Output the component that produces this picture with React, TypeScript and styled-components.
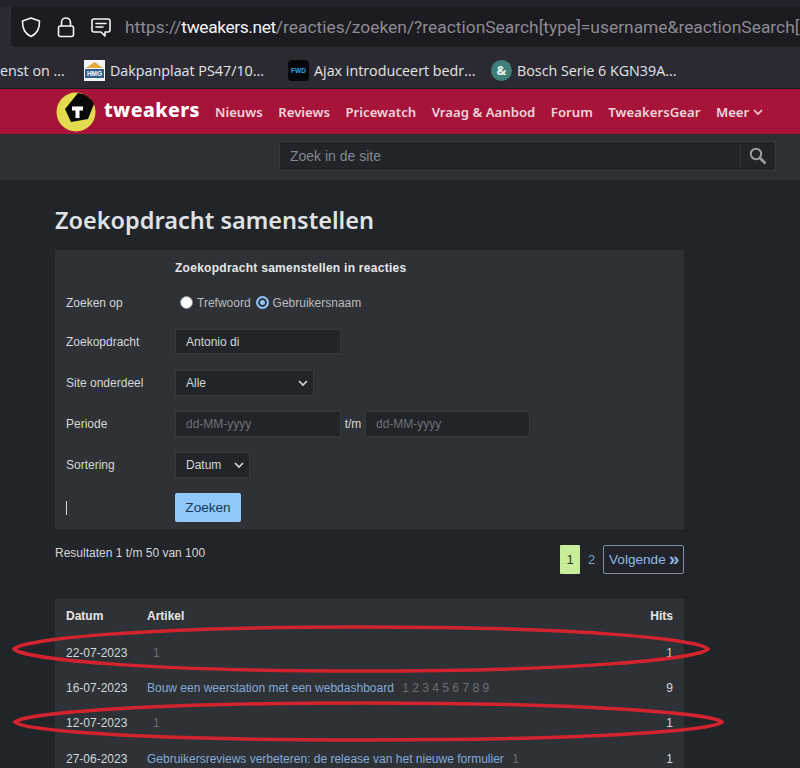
import React from "react";
import styled, { createGlobalStyle } from "styled-components";

const GlobalStyle = createGlobalStyle`
  html, body { margin: 0; padding: 0; background: #212429; }
  * { box-sizing: border-box; }
`;

const Page = styled.div`
  position: relative;
  width: 800px;
  height: 768px;
  overflow: hidden;
  background: #212429;
  font-family: "Liberation Sans", Arial, sans-serif;
  font-size: 12px;
  color: #d4d6d8;
`;

/* browser chrome */
const Chrome = styled.div`
  height: 89px;
  background: #2b2a33;
  border-top: 7px solid #24232b;
  border-bottom: 1px solid #1c1b22;
`;

const UrlBar = styled.div`
  display: flex;
  align-items: center;
  height: 40px;
  margin-left: 11px;
  padding-left: 9px;
  background: #1c1b22;
  border-radius: 4px 0 0 4px;
  overflow: hidden;
`;

const ChromeIcon = styled.svg`
  flex: none;
  width: 22px;
  height: 22px;
  margin-right: 13px;
  fill: none;
  stroke: #f4f4f6;
  stroke-width: 1.6;
  stroke-linejoin: round;
  stroke-linecap: round;
`;

const UrlText = styled.div`
  font-family: Roboto, "Noto Sans", sans-serif;
  font-size: 17.4px;
  white-space: nowrap;
  color: #8c8b91;
  b {
    font-weight: 400;
    letter-spacing: -0.4px;
    color: #f4f4f6;
  }
`;

const Bookmarks = styled.div`
  display: flex;
  align-items: center;
  height: 41px;
  padding-top: 6px;
  overflow: hidden;
`;

const Bookmark = styled.div<{ $width: number }>`
  flex: none;
  display: flex;
  align-items: center;
  gap: 5px;
  width: ${({ $width }) => $width}px;
  font-family: "Open Sans", "Noto Sans", sans-serif;
  font-size: 14.3px;
  color: #e4e4e6;
  white-space: nowrap;
`;

const Favicon = styled.svg`
  flex: none;
  width: 21px;
  height: 21px;
`;

/* site header */
const RedBar = styled.div`
  display: flex;
  align-items: center;
  height: 45px;
  padding-left: 56px;
  background: #a8133a;
`;

const Logo = styled.svg`
  flex: none;
  width: 40px;
  height: 40px;
  margin-top: 1px;
`;

const WordMark = styled.div`
  margin: -5px 15px 0 8px;
  font-family: "Noto Sans", sans-serif;
  font-size: 19.5px;
  font-weight: 800;
  letter-spacing: 0.4px;
  color: #fff;
`;

const Nav = styled.nav`
  display: flex;
  align-items: center;
  gap: 15.5px;
`;

const NavItem = styled.a`
  display: flex;
  align-items: center;
  gap: 4px;
  font-family: "Noto Sans", sans-serif;
  font-size: 13.2px;
  font-weight: 600;
  color: #f0d3da;
  white-space: nowrap;
`;

const SearchStrip = styled.div`
  display: flex;
  justify-content: flex-end;
  height: 46px;
  padding: 7px 24px 0 0;
  background: #2d3136;
`;

const SearchBox = styled.div`
  display: flex;
  width: 497px;
  height: 30px;
  background: #212429;
  border: 1px solid #363b41;
`;

const SearchInput = styled.div`
  flex: 1;
  padding-left: 10px;
  font-size: 14px;
  line-height: 29px;
  color: #85888c;
`;

const SearchButton = styled.div`
  display: flex;
  align-items: center;
  justify-content: center;
  width: 35px;
  border-left: 1px solid #2d3136;
  color: #9a9da1;
`;

/* main column */
const Main = styled.main`
  width: 629px;
  margin-left: 55px;
`;

const Title = styled.h1`
  margin: 25px 0 15px;
  font-family: "Noto Sans", sans-serif;
  font-size: 23.5px;
  font-weight: 600;
  line-height: 30px;
  color: #dfe1e3;
`;

const FormPanel = styled.form`
  height: 279px;
  padding: 11px 11px 0;
  background: #2e3237;
`;

const FormHeading = styled.div`
  margin-left: 109px;
  font-size: 12px;
  font-weight: 700;
  line-height: 14px;
  letter-spacing: 0.27px;
  color: #e6e7e8;
`;

const FormRow = styled.div<{ $top: number; $height: number }>`
  display: flex;
  align-items: center;
  height: ${({ $height }) => $height}px;
  margin-top: ${({ $top }) => $top}px;
`;

const FieldLabel = styled.label`
  flex: none;
  width: 109px;
  color: #d4d6d8;
`;

const RadioGroup = styled.div`
  display: flex;
  align-items: center;
  margin-left: 5px;
`;

const Radio = styled.span<{ $checked?: boolean }>`
  flex: none;
  width: 13px;
  height: 13px;
  margin-right: 4px;
  border-radius: 50%;
  background: ${({ $checked }) => ($checked ? "#8fc6f7" : "#fff")};
  border: ${({ $checked }) => ($checked ? "2.5px solid #8fc6f7" : "1px solid #8b8d90")};
  box-shadow: ${({ $checked }) => ($checked ? "inset 0 0 0 2px #2e3237" : "none")};
`;

const RadioText = styled.span`
  margin-right: 5px;
  color: #b9bcbf;
`;

const Field = styled.div<{ $width: number; $muted?: boolean }>`
  display: flex;
  align-items: center;
  justify-content: space-between;
  flex: none;
  width: ${({ $width }) => $width}px;
  height: 100%;
  padding: 0 5px 0 10px;
  background: #212429;
  border: 1px solid #353a40;
  color: ${({ $muted }) => ($muted ? "#6e7175" : "#d4d6d8")};
`;

const Between = styled.span`
  width: 24px;
  text-align: center;
  color: #d4d6d8;
`;

const Caret = styled.div`
  flex: none;
  width: 1px;
  height: 14px;
  margin-right: 108px;
  background: #d4d6d8;
`;

const SubmitButton = styled.button`
  width: 66px;
  height: 29px;
  padding: 0;
  border: 0;
  border-radius: 2px;
  background: #90c8fb;
  font-family: inherit;
  font-size: 13.6px;
  color: #16385a;
`;

const PagerRow = styled.div`
  display: flex;
  justify-content: space-between;
  height: 70px;
  padding-top: 16px;
`;

const ResultCount = styled.div`
  margin-top: 1px;
  line-height: 14px;
  color: #d4d6d8;
`;

const Pager = styled.div`
  display: flex;
  height: 29px;
  align-items: stretch;
`;

const PageCurrent = styled.span`
  width: 20px;
  border-radius: 1px;
  background: #c7ed9b;
  font-size: 13px;
  line-height: 29px;
  text-align: center;
  color: #2b3a1c;
`;

const PageLink = styled.span`
  width: 23px;
  font-size: 13px;
  line-height: 30px;
  text-align: center;
  color: #7b9cc4;
`;

const NextLink = styled.span`
  display: flex;
  align-items: center;
  gap: 3px;
  width: 81px;
  padding-left: 5px;
  border: 1px solid #7d8fa6;
  border-radius: 2px;
  background: #20242a;
  font-size: 13.6px;
  color: #8fb8e6;
  b {
    font-size: 19px;
    font-weight: 700;
    line-height: 24px;
    margin-top: -2px;
  }
`;

const Results = styled.div`
  background: #2e3237;
  padding: 0 11px;
`;

const ResultRow = styled.div<{ $header?: boolean }>`
  display: grid;
  grid-template-columns: 81px 1fr auto;
  align-items: center;
  height: ${({ $header }) => ($header ? "36px" : "35.3px")};
  padding-bottom: ${({ $header }) => ($header ? "3px" : "0")};
  font-weight: ${({ $header }) => ($header ? 700 : 400)};
  color: ${({ $header }) => ($header ? "#e6e7e8" : "#d4d6d8")};
`;

const ArticleCell = styled.div`
  display: flex;
  gap: 8.5px;
  white-space: nowrap;
`;

const ArticleLink = styled.a`
  color: #84a9d6;
`;

const PageNumbers = styled.span<{ $indent?: boolean }>`
  padding-left: ${({ $indent }) => ($indent ? "6px" : "0")};
  color: #6a6e72;
`;

const Annotation = styled.svg`
  position: absolute;
  left: 0;
  top: 0;
  width: 800px;
  height: 768px;
  pointer-events: none;
  fill: none;
  stroke: #d3232e;
  stroke-width: 3.5;
`;

const rows = [
  { date: "22-07-2023", pages: "1", hits: "1" },
  { date: "16-07-2023", title: "Bouw een weerstation met een webdashboard", pages: "1 2 3 4 5 6 7 8 9", hits: "9" },
  { date: "12-07-2023", pages: "1", hits: "1" },
  { date: "27-06-2023", title: "Gebruikersreviews verbeteren: de release van het nieuwe formulier", pages: "1", hits: "1" },
];

const navItems = ["Nieuws", "Reviews", "Pricewatch", "Vraag & Aanbod", "Forum", "TweakersGear"];

const Chevron: React.FC<{ color: string; size?: number }> = ({ color, size = 10 }) => (
  <svg width={size} height={size} viewBox="0 0 10 10" fill="none" stroke={color} strokeWidth="1.7">
    <path d="M1 3 L5 7 L9 3" />
  </svg>
);

const App: React.FC = () => (
  <Page>
    <GlobalStyle />
    <Chrome>
      <UrlBar>
        <ChromeIcon viewBox="0 0 22 22">
          <path d="M11 2 L19.5 5 C19.8 12 17.5 17.5 11 20.5 C4.5 17.5 2.2 12 2.5 5 Z" />
        </ChromeIcon>
        <ChromeIcon viewBox="0 0 22 22">
          <rect x="3.5" y="10" width="15" height="10.5" rx="2" />
          <path d="M6.5 10 V6.5 C6.5 0.5 15.5 0.5 15.5 6.5 V10" />
        </ChromeIcon>
        <ChromeIcon viewBox="0 0 22 22">
          <path d="M4 3 H18 A2 2 0 0 1 20 5 V14 A2 2 0 0 1 18 16 H15 V20 L11 16 H4 A2 2 0 0 1 2 14 V5 A2 2 0 0 1 4 3 Z" />
          <path d="M6 7.5 H16 M6 11 H13" />
        </ChromeIcon>
        <UrlText>
          https://<b>tweakers.net</b>/reacties/zoeken/?reactionSearch[type]=username&amp;reactionSearch[
        </UrlText>
      </UrlBar>
      <Bookmarks>
        <Bookmark $width={84}>enst on ...</Bookmark>
        <Bookmark $width={204}>
          <Favicon viewBox="0 0 21 21">
            <rect width="21" height="21" fill="#f2f4f6" />
            <path d="M10.5 2 L19 8 H2 Z" fill="#e2a93a" />
            <rect x="1" y="9" width="19" height="9" fill="#2f5f8f" />
            <text x="10.5" y="16" fontSize="6.5" fontWeight="700" fill="#fff" textAnchor="middle" fontFamily="Liberation Sans">HMG</text>
          </Favicon>
          Dakpanplaat PS47/10...
        </Bookmark>
        <Bookmark $width={203}>
          <Favicon viewBox="0 0 21 21">
            <rect width="21" height="21" rx="4" fill="#05070b" />
            <text x="10.5" y="13" fontSize="6.5" fontWeight="700" fill="#2aa7e8" textAnchor="middle" fontFamily="Liberation Sans">FWD</text>
          </Favicon>
          Ajax introduceert bedr...
        </Bookmark>
        <Bookmark $width={240}>
          <Favicon viewBox="0 0 21 21">
            <circle cx="10.5" cy="10.5" r="10.5" fill="#3f7f78" />
            <text x="10.5" y="15" fontSize="13" fontWeight="700" fill="#e8f2f0" textAnchor="middle" fontFamily="Noto Sans">&amp;</text>
          </Favicon>
          Bosch Serie 6 KGN39A...
        </Bookmark>
      </Bookmarks>
    </Chrome>

    <RedBar>
      <Logo viewBox="0 0 40 40">
        <circle cx="20" cy="20" r="19.5" fill="#e2dc4e" />
        <path d="M22 1 A19.5 19.5 0 0 1 38 12 L32 27 L15 30 L9 17 Z" fill="#0a0a0a" />
        <path d="M16 14.5 H27 V18.5 H23.5 V26 H19.5 V18.5 H16 Z" fill="#fff" />
      </Logo>
      <WordMark>tweakers</WordMark>
      <Nav>
        {navItems.map((item) => (
          <NavItem key={item}>{item}</NavItem>
        ))}
        <NavItem>
          Meer <Chevron color="#f0d3da" />
        </NavItem>
      </Nav>
    </RedBar>

    <SearchStrip>
      <SearchBox>
        <SearchInput>Zoek in de site</SearchInput>
        <SearchButton>
          <svg width="18" height="18" viewBox="0 0 18 18" fill="none" stroke="currentColor">
            <circle cx="7" cy="7" r="5.2" strokeWidth="2" />
            <path d="M11 11 L16.5 16.5" strokeWidth="3" />
          </svg>
        </SearchButton>
      </SearchBox>
    </SearchStrip>

    <Main>
      <Title>Zoekopdracht samenstellen</Title>
      <FormPanel>
        <FormHeading>Zoekopdracht samenstellen in reacties</FormHeading>
        <FormRow $top={15} $height={25}>
          <FieldLabel>Zoeken op</FieldLabel>
          <RadioGroup>
            <Radio />
            <RadioText>Trefwoord</RadioText>
            <Radio $checked />
            <RadioText>Gebruikersnaam</RadioText>
          </RadioGroup>
        </FormRow>
        <FormRow $top={14} $height={25}>
          <FieldLabel>Zoekopdracht</FieldLabel>
          <Field $width={166}>Antonio di</Field>
        </FormRow>
        <FormRow $top={16} $height={26}>
          <FieldLabel>Site onderdeel</FieldLabel>
          <Field $width={139}>
            Alle <Chevron color="#d4d6d8" />
          </Field>
        </FormRow>
        <FormRow $top={15} $height={26}>
          <FieldLabel>Periode</FieldLabel>
          <Field $width={166} $muted>dd-MM-yyyy</Field>
          <Between>t/m</Between>
          <Field $width={165} $muted>dd-MM-yyyy</Field>
        </FormRow>
        <FormRow $top={15} $height={26}>
          <FieldLabel>Sortering</FieldLabel>
          <Field $width={75}>
            Datum <Chevron color="#d4d6d8" />
          </Field>
        </FormRow>
        <FormRow $top={15} $height={29}>
          <Caret />
          <SubmitButton type="button">Zoeken</SubmitButton>
        </FormRow>
      </FormPanel>

      <PagerRow>
        <ResultCount>Resultaten 1 t/m 50 van 100</ResultCount>
        <Pager>
          <PageCurrent>1</PageCurrent>
          <PageLink>2</PageLink>
          <NextLink>
            Volgende <b>»</b>
          </NextLink>
        </Pager>
      </PagerRow>

      <Results>
        <ResultRow $header>
          <div>Datum</div>
          <div>Artikel</div>
          <div>Hits</div>
        </ResultRow>
        {rows.map((row) => (
          <ResultRow key={row.date}>
            <div>{row.date}</div>
            <ArticleCell>
              {row.title && <ArticleLink>{row.title}</ArticleLink>}
              <PageNumbers $indent={!row.title}>{row.pages}</PageNumbers>
            </ArticleCell>
            <div>{row.hits}</div>
          </ResultRow>
        ))}
      </Results>
    </Main>

    <Annotation viewBox="0 0 800 768">
      <path d="M14 649 C22 640 130 627 360 627 C590 627 700 640 708 649 C700 658 590 671 360 671 C130 671 22 658 14 649 Z" />
      <path d="M15 722 C23 714 130 703 365 703 C600 703 714 714 722 722 C714 730 600 740 365 740 C130 740 23 730 15 722 Z" />
    </Annotation>
  </Page>
);

export default App;
